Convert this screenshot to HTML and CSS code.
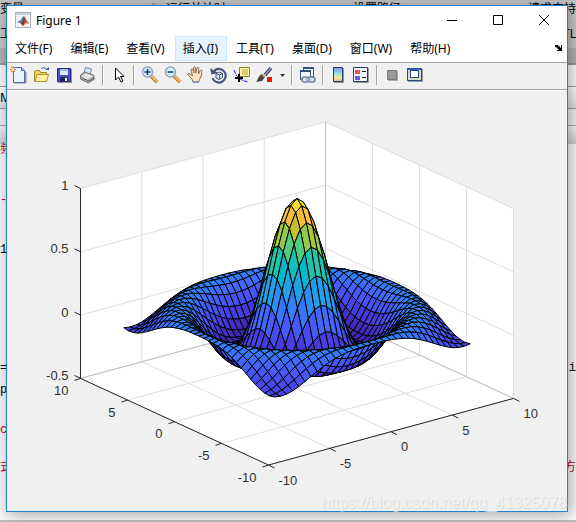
FILE: index.html
```html
<!DOCTYPE html>
<html lang="zh-CN">
<head>
    <meta charset="UTF-8">
    <meta name="viewport" content="width=device-width, initial-scale=1.0">
    <title>Figure 1</title>
    <link rel="stylesheet" href="styles.css">
</head>
<body>
    <div class="desktop">
        <!-- Editor window behind the figure -->
        <div class="backdrop">
            <div class="back-ribbon">
                <div class="back-row top"><span>变量</span><span><i>▷</i> 运行并计时</span><span>设置路径</span><span>请求支持</span></div>
                <div class="back-row"><span>工</span><span>TL</span></div>
            </div>
            <div class="back-tabs"></div>
            <div class="back-path"></div>
            <div class="back-crumb"><span>MA</span></div>
            <div class="back-gap"></div>
            <div class="back-title"></div>
            <div class="back-code">
                <div class="line red"><span>频</span></div>
                <div class="line red"><span>-</span></div>
                <div class="line"><span>1,</span></div>
                <div class="line"></div>
                <div class="line tall"><span>=-</span><span class="right">si</span></div>
                <div class="line small"><span>pe</span></div>
                <div class="line red"><span>co</span></div>
                <div class="line red"><span>式</span><span class="right">方</span></div>
            </div>
        </div>

        <!-- Figure window -->
        <main class="window">
            <header class="titlebar">
                <svg class="app-icon" width="16" height="16" viewBox="0 0 16 16">
                    <rect x=".5" y=".5" width="15" height="15" fill="#f0f3f7" stroke="#a5afba"/>
                    <path d="M1 1h14v2H1z" fill="#c5d3e2"/>
                    <path d="M2 10l4-2 2-4 2 3-3 6-2-2z" fill="#3e83ac"/>
                    <path d="M9 4l5 8-3-1-3 3-2-3 2-2z" fill="#d2592b"/>
                    <path d="M9 4l1 4-2 6-2-3 2-2z" fill="#8b2e22"/>
                </svg>
                <h1>Figure 1</h1>
                <div class="window-buttons">
                    <button type="button" aria-label="最小化"><svg width="12" height="12" viewBox="0 0 12 12"><path d="M1 6.500h10"/></svg></button>
                    <button type="button" aria-label="最大化"><svg width="12" height="12" viewBox="0 0 12 12"><path d="M1.500 1.500h9v9h-9z"/></svg></button>
                    <button type="button" aria-label="关闭"><svg width="12" height="12" viewBox="0 0 12 12"><path d="M1 1l10 10M11 1L1 11"/></svg></button>
                </div>
            </header>

            <nav class="menubar">
                <button type="button">文件(F)</button>
                <button type="button">编辑(E)</button>
                <button type="button">查看(V)</button>
                <button type="button" class="active">插入(I)</button>
                <button type="button">工具(T)</button>
                <button type="button">桌面(D)</button>
                <button type="button">窗口(W)</button>
                <button type="button">帮助(H)</button>
                <button type="button" class="dock" aria-label="停靠">
                    <svg width="8" height="8" viewBox="0 0 8 8"><path d="M0 1h3l3 3V1h1v6H2V6h2L1 3H0z" fill="#000"/></svg>
                </button>
            </nav>

            <div class="toolbar">
                <button type="button" aria-label="新建图窗"><svg viewBox="0 0 18 18">
                    <path d="M5.500 2.500h8l3 4v11h-12z" fill="#8b92a5"/>
                    <path d="M3.500 1.500h8l3 3v12h-11z" fill="#eaf3fd" stroke="#4a6aa8"/>
                    <path d="M11.500 1.500v3h3" fill="#b8d0ef" stroke="#4a6aa8"/>
                    <path d="M3 0v7M0 3.500h6M1 1l4 5M5 1L1 6" stroke="#d0763f"/><circle cx="3" cy="3.500" r="1.300" fill="#fff3c8"/>
                </svg></button>
                <button type="button" aria-label="打开文件"><svg viewBox="0 0 18 18">
                    <path d="M1.500 15.500v-10l1-1h4l1 2h6v9z" fill="#efd568" stroke="#a6862a"/>
                    <path d="M2 15.500l2-7h11.500l-2 7z" fill="#fff0a0" stroke="#b58f22"/>
                    <path d="M8 3c2-2 4-2 6 1" fill="none" stroke="#3b5a80"/><path d="M12 4h4V1z" fill="#3b5a80"/>
                </svg></button>
                <button type="button" aria-label="保存图窗"><svg viewBox="0 0 18 18">
                    <path d="M2 3h14v14H2z" fill="#8f8f9c"/>
                    <path d="M1.500 2.500h13v13h-13z" fill="#4d50bb" stroke="#292d82"/>
                    <path d="M4 3h8v6H4z" fill="#dce9fb"/><path d="M4 3h8v2H4z" fill="#9db9e6"/>
                    <path d="M4 11h8v4H4z" fill="#22255b"/><path d="M9 12h2v3H9z" fill="#fff"/>
                </svg></button>
                <button type="button" aria-label="打印图窗"><svg viewBox="0 0 18 18">
                    <path d="M5 8l1.500-6.500 6 1.500L11 9z" fill="#dbeaff" stroke="#6f86a6"/>
                    <path d="M1.500 9l4-3 9 3 1 4-6 4-8-4z" fill="#b4b4b4" stroke="#707070"/>
                    <path d="M3 9.500l4-2 7 2.500-4 2.500z" fill="#e8e8e8"/>
                    <path d="M3 12l7 3 5-3" fill="none" stroke="#555"/><path d="M4 11l5 2" stroke="#fff"/>
                </svg></button>
                <span class="separator"></span>
                <button type="button" aria-label="编辑绘图"><svg viewBox="0 0 18 18">
                    <path d="M5.500 2v12l3-3 2.500 5 2-1-2.500-4.500H14z" fill="#fff" stroke="#000"/>
                </svg></button>
                <span class="separator"></span>
                <button type="button" aria-label="放大"><svg viewBox="0 0 18 18">
                    <path d="M10 10l6 6" stroke="#b5772f" stroke-width="3.500"/><path d="M10 9.500l6 6" stroke="#efbc6a" stroke-width="2"/>
                    <circle cx="6.500" cy="6" r="5" fill="#d5f2fd" stroke="#8ba4cc" stroke-width="1.500"/><path d="M3.500 6h6M6.500 3v6" stroke="#17376b" stroke-width="1.500"/>
                </svg></button>
                <button type="button" aria-label="缩小"><svg viewBox="0 0 18 18">
                    <path d="M10 10l6 6" stroke="#b5772f" stroke-width="3.500"/><path d="M10 9.500l6 6" stroke="#efbc6a" stroke-width="2"/>
                    <circle cx="6.500" cy="6" r="5" fill="#d5f2fd" stroke="#8ba4cc" stroke-width="1.500"/><path d="M3.500 6h6" stroke="#17376b" stroke-width="1.500"/>
                </svg></button>
                <button type="button" aria-label="平移"><svg viewBox="0 0 18 18">
                    <path d="M6 16l-1-3-4-4c-.5-1.500 1-2 2-1l2.500 2L4 4c0-1.500 1.500-1.500 2 0l1 3-.500-5c.2-1.500 2-1.500 2 0l.5 5 .8-5c.5-1.300 2-1 2 .5L11.500 8l1.800-3.500c.8-1 2-.3 1.700 1L14 11l-2 3v2z" fill="#ffe4c2" stroke="#8c6a58"/>
                    <path d="M6 15h6v2H6z" fill="#7b98ce"/>
                </svg></button>
                <button type="button" aria-label="三维旋转"><svg viewBox="0 0 18 18">
                    <path d="M4 5a6.800 6.800 0 1 1-1.500 7" fill="none" stroke="#485579" stroke-width="2.200"/>
                    <path d="M0 2l1.500 6.500L8 7z" fill="#485579"/>
                    <path d="M6 7.500l3-1.500 3.500 1.500v4L9 13.500l-3-1.500zM6 7.500l3.500 1.500 3-1.500M9.500 9v4" fill="#d9f0fa" stroke="#40516f"/>
                </svg></button>
                <button type="button" aria-label="数据游标"><svg viewBox="0 0 18 18">
                    <path d="M1 4c2 6 5 10 14 12" fill="none" stroke="#1a1ae0" stroke-dasharray="4 1"/>
                    <path d="M6.500 1.500h10v9h-10z" fill="#fff6a8" stroke="#8a8130"/><path d="M9 4h6M9 6h6M9 8h6" stroke="#b0a23c"/>
                    <path d="M2 12h8M6 8v8" stroke="#000" stroke-width="2"/>
                </svg></button>
                <button type="button" aria-label="刷亮"><svg viewBox="0 0 18 18">
                    <path d="M15 2l-6 7" stroke="#4b5280" stroke-width="3.500"/><path d="M15 2l-6 7" stroke="#b6bbd8"/>
                    <path d="M6 8l3 3-3 4-6 1c2-2 2-6 6-8z" fill="#454545"/><path d="M6 8l3 3" stroke="#c2a273" stroke-width="2"/>
                    <path d="M11 11h5v5h-5z" fill="#fa0f0f"/>
                </svg></button>
                <button type="button" class="caret" aria-label="刷亮选项"><svg viewBox="0 0 18 18"><path d="M4 8h5L6.500 11z" fill="#333"/></svg></button>
                <span class="separator"></span>
                <button type="button" aria-label="链接绘图"><svg viewBox="0 0 18 18">
                    <path d="M4.500 1.500h10v9h-10z" fill="#fff" stroke="#31538d"/><path d="M4 1h11v2H4z" fill="#31538d"/>
                    <path d="M1.500 4.500h10v9h-10z" fill="#f4f8fc" stroke="#31538d"/><path d="M1 4h11v2H1z" fill="#31538d"/>
                    <rect x="3" y="11" width="7" height="5" rx="2.500" fill="#dce4ea" stroke="#6f86a0" stroke-width="1.500"/>
                    <rect x="9" y="11" width="7" height="5" rx="2.500" fill="#dce4ea" stroke="#6f86a0" stroke-width="1.500"/><path d="M7 13.500h5" stroke="#a4b3c2" stroke-width="2"/>
                </svg></button>
                <span class="separator"></span>
                <button type="button" aria-label="插入颜色栏"><svg viewBox="0 0 18 18">
                    <defs><linearGradient id="bar" x1="0" y1="0" x2="0" y2="1"><stop stop-color="#8a8fe0"/><stop offset=".4" stop-color="#8fe0ea"/><stop offset=".7" stop-color="#f2ec94"/><stop offset="1" stop-color="#f0a986"/></linearGradient></defs>
                    <path d="M4 2h10v15H4z" fill="#999"/><path d="M3.500 1.500h9v14h-9z" fill="url(#bar)" stroke="#233c73"/>
                </svg></button>
                <button type="button" aria-label="插入图例"><svg viewBox="0 0 18 18">
                    <path d="M1 2h15v15H1z" fill="#999"/><path d="M.500 1.500h14v14H.500z" fill="#f8f9ff" stroke="#233c73"/>
                    <path d="M2 4h5v4H2z" fill="#e65353"/><path d="M2 10h5v4H2z" fill="#6060e2"/><path d="M9 5.500h4M9 11.500h4" stroke="#222"/>
                </svg></button>
                <span class="separator"></span>
                <button type="button" aria-label="隐藏绘图工具"><svg viewBox="0 0 18 18">
                    <path d="M4 5h10v10H4z" fill="#aaa"/><path d="M3.500 4.500h9v9h-9z" fill="#989898" stroke="#777"/>
                </svg></button>
                <button type="button" aria-label="显示绘图工具"><svg viewBox="0 0 18 18">
                    <path d="M1 3h15v13H1z" fill="#999"/><path d="M.500 2.500h14v12H.500z" fill="#d4d9cb" stroke="#274886"/>
                    <path d="M0 2h15v2H0z" fill="#3156a4"/><path d="M3.500 4.500h8v7h-8z" fill="#fff" stroke="#274886"/>
                </svg></button>
            </div>

            <svg id="plot" class="plot" viewBox="0 0 560 420" role="img" aria-label="sin(R)/R"></svg>
            <div class="watermark">https://blog.csdn.net/qq_41325078</div>
        </main>
    </div>
    <script src="plot.js"></script>
</body>
</html>
```
FILE: styles.css
```css
* {
    box-sizing: border-box;
}
body {
    margin: 0;
    font-family: "Noto Sans", "Noto Sans CJK SC", sans-serif;
    font-size: 12px;
    color: #000;
}
button {
    padding: 0;
    border: none;
    background: none;
    color: inherit;
    font: inherit;
}
.desktop {
    position: relative;
    min-height: 100vh;
    padding: 5px 8px 10px 6px;
    overflow: hidden;
}

/* Editor window behind */
.backdrop {
    position: absolute;
    inset: 0;
    display: flex;
    flex-direction: column;
    background: #f8f8f8;
    border-bottom: 2px solid #bdbdbd;
    overflow: hidden;
    white-space: nowrap;
}
.back-ribbon {
    height: 48px;
    background: #c4c4c4;
}
.back-row {
    display: flex;
    justify-content: space-between;
    height: 24px;
    line-height: 20px;
}
.back-row.top {
    line-height: 18px;
}
.back-row i {
    color: #2c8a2c;
    font-style: normal;
}
.back-tabs {
    height: 15px;
    background: #b0b0b0;
}
.back-path {
    height: 24px;
    border-top: 2px solid #999;
    border-bottom: 1px solid #999;
}
.back-crumb {
    height: 22px;
    line-height: 22px;
    background: linear-gradient(#fff, #ddd);
    border-bottom: 1px solid #999;
}
.back-gap {
    height: 17px;
    background: #eee;
    border-top: 8px solid #eee;
    border-bottom: 1px solid #aaa;
}
.back-title {
    height: 18px;
    background: linear-gradient(#f2f2f2, #ccc);
}
.back-code {
    font-family: "Liberation Mono", "Noto Sans CJK SC", monospace;
}
.line {
    display: flex;
    height: 50px;
    line-height: 12px;
}
.line.tall {
    height: 22px;
}
.line.small {
    height: 40px;
}
.line:nth-child(7) {
    height: 38px;
}
.line:nth-child(4) {
    height: 68px;
}
.right {
    margin-left: auto;
}
.red {
    color: #c00012;
}

/* Figure window */
.window {
    position: relative;
    background: #f0f0f0;
    border: 1px solid #1f7fd0;
    box-shadow: 2px 2px 14px rgba(0, 0, 0, 0.35);
}
.titlebar {
    display: flex;
    align-items: center;
    height: 30px;
    padding: 0 0 2px 8px;
    background: #fff;
}
.titlebar h1 {
    margin: 0 auto 0 5px;
    font-size: 12px;
    font-weight: normal;
}
.window-buttons {
    display: flex;
}
.window-buttons button {
    display: grid;
    place-items: center;
    width: 46px;
    height: 28px;
}
.window-buttons path {
    fill: none;
    stroke: #000;
}
.menubar {
    display: flex;
    gap: 1px;
    height: 27px;
    padding-bottom: 1px;
    background: #fff;
    border-bottom: 1px solid #a0a0a0;
}
.menubar button {
    padding: 0 8px 2px 7px;
    border: 1px solid transparent;
    white-space: nowrap;
}
.menubar .active {
    background: #e5f3ff;
    border-color: #cce8ff;
}
.menubar .dock {
    margin-left: auto;
    padding: 0 3px 2px;
}
.toolbar {
    display: flex;
    align-items: center;
    height: 28px;
    padding-bottom: 3px;
    border-bottom: 1px solid #fff;
    box-shadow: inset 0 -1px #a0a0a0;
}
.toolbar button {
    display: grid;
    place-items: center;
    width: 23px;
    height: 24px;
}
.toolbar svg {
    width: 18px;
    height: 18px;
}
.toolbar .caret {
    width: 12px;
}
.separator {
    width: 2px;
    height: 20px;
    margin: 0 3px;
    background: #a0a0a0;
    border-right: 1px solid #fff;
}
.plot {
    display: block;
    width: 100%;
    font-family: "Liberation Sans", Arial, sans-serif;
    font-size: 13px;
}
.plot text {
    fill: #303030;
    dominant-baseline: central;
}
.plot .end {
    text-anchor: end;
}
.walls {
    fill: #fff;
}
.grid {
    stroke: #dedede;
}
.edge {
    stroke: #bfbfbf;
}
.axis {
    stroke: #262626;
}
.surface {
    stroke: #000;
    stroke-linejoin: round;
}
.watermark {
    position: absolute;
    right: 0;
    bottom: 0;
    color: #f2f2f2;
    font-family: "Liberation Sans", Arial, sans-serif;
    font-size: 16px;
    line-height: 16px;
    text-shadow: 1px 1px 1px #d4d4d4;
}
```
FILE: plot.js
```js
const svg = document.getElementById("plot");
const NS = "http://www.w3.org/2000/svg";

// Parula colormap stops
const parula = [
    [62, 38, 168], [66, 46, 192], [69, 55, 213], [71, 65, 229], [72, 77, 240],
    [71, 88, 248], [69, 99, 253], [62, 111, 255], [50, 124, 252], [46, 135, 247],
    [43, 146, 238], [37, 156, 231], [32, 165, 227], [24, 174, 219], [1, 181, 208],
    [2, 187, 195], [25, 191, 182], [44, 196, 167], [55, 200, 151], [74, 203, 132],
    [100, 205, 111], [129, 204, 89], [157, 201, 67], [185, 196, 49], [209, 191, 39],
    [230, 187, 45], [248, 186, 61], [254, 195, 56], [252, 207, 48], [247, 220, 42],
    [245, 233, 36], [249, 251, 21]
];

function add(tag, attrs, text) {
    const el = document.createElementNS(NS, tag);
    for (const key in attrs) el.setAttribute(key, attrs[key]);
    if (text !== undefined) el.textContent = text;
    svg.appendChild(el);
}

// Data coordinates to canvas coordinates
function project(x, y, z) {
    return [
        290 + 12.25 * x - 9.4 * y,
        297.4 - 3.33 * x - 4.33 * y - 126.6 * (z + 0.5)
    ];
}

function line(a, b, cls) {
    add("line", { x1: a[0], y1: a[1], x2: b[0], y2: b[1], class: cls });
}

function polygon(points, attrs) {
    add("polygon", { points: points.map(p => p.map(v => v.toFixed(1)).join(",")).join(" "), ...attrs });
}

function height(x, y) {
    const r = Math.sqrt(x * x + y * y) + Number.EPSILON;
    return Math.sin(r) / r;
}

function color(z) {
    const t = Math.min(1, Math.max(0, (z + 0.2172) / 1.2172)) * (parula.length - 1);
    const i = Math.min(parula.length - 2, Math.floor(t));
    const c = parula[i].map((v, k) => Math.round(v + (parula[i + 1][k] - v) * (t - i)));
    return "rgb(" + c.join(",") + ")";
}

// Walls and grid
polygon([
    project(-10, 10, 1), project(10, 10, 1), project(10, -10, 1),
    project(10, -10, -0.5), project(-10, -10, -0.5), project(-10, 10, -0.5)
], { class: "walls" });

for (const t of [-10, -5, 0, 5, 10]) {
    line(project(t, 10, -0.5), project(t, 10, 1), "grid");
    line(project(10, t, -0.5), project(10, t, 1), "grid");
    line(project(t, -10, -0.5), project(t, 10, -0.5), "grid");
    line(project(-10, t, -0.5), project(10, t, -0.5), "grid");
}
for (const z of [0, 0.5, 1]) {
    line(project(-10, 10, z), project(10, 10, z), "grid");
    line(project(10, 10, z), project(10, -10, z), "grid");
}
line(project(-10, 10, -0.5), project(10, 10, -0.5), "edge");
line(project(10, 10, -0.5), project(10, -10, -0.5), "edge");
line(project(10, 10, -0.5), project(10, 10, 1), "edge");

// Axes, ticks and labels
line(project(-10, 10, -0.5), project(-10, 10, 1), "axis");
line(project(-10, 10, -0.5), project(-10, -10, -0.5), "axis");
line(project(-10, -10, -0.5), project(10, -10, -0.5), "axis");

for (const z of [-0.5, 0, 0.5, 1]) {
    const p = project(-10, 10, z);
    line(p, [p[0] - 6, p[1] - 3], "axis");
    add("text", { x: p[0] - 12, y: p[1] - 3, class: "end" }, z);
}
for (const t of [-10, -5, 0, 5, 10]) {
    const p = project(-10, t, -0.5);
    line(p, [p[0] - 6, p[1] + 2], "axis");
    add("text", { x: p[0] - 12, y: p[1] + 12, class: "end" }, t);

    const q = project(t, -10, -0.5);
    line(q, [q[0] + 6, q[1] + 3], "axis");
    add("text", { x: q[0] + 10, y: q[1] + 15 }, t);
}

// Surface, drawn from the far corner to the near one
const step = 0.5;
for (let x = 8 - step; x >= -8; x -= step) {
    for (let y = 8 - step; y >= -8; y -= step) {
        polygon([[x, y], [x + step, y], [x + step, y + step], [x, y + step]]
            .map(([a, b]) => project(a, b, height(a, b))),
            { class: "surface", fill: color(height(x, y)) });
    }
}
```
